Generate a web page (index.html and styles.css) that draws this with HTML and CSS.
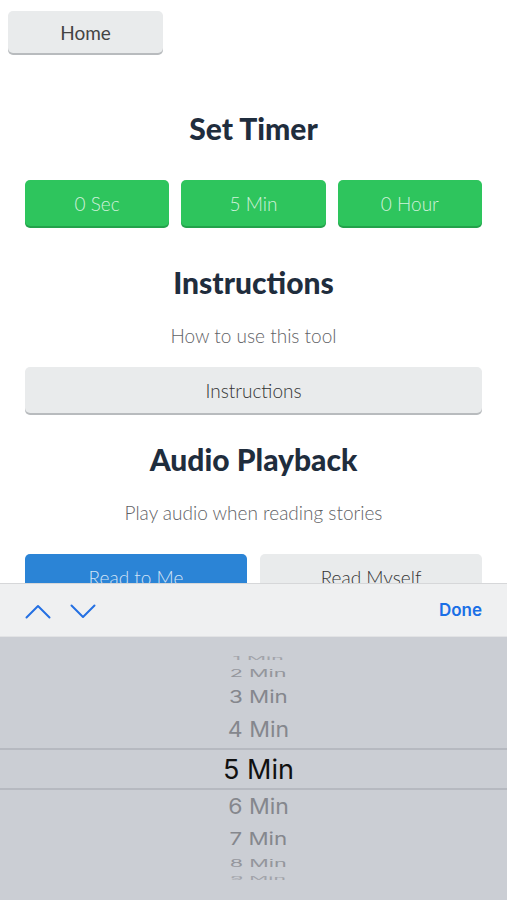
FILE: index.html
```html
<!DOCTYPE html>
<html lang="en">
<head>
    <meta charset="UTF-8">
    <meta name="viewport" content="width=device-width, initial-scale=1.0">
    <title>Set Timer</title>
    <link rel="stylesheet" href="styles.css">
</head>
<body>
    <div class="topbar">
        <button class="btn btn-grey home-btn">Home</button>
    </div>

    <main class="content">
        <section class="block timer">
            <h2>Set Timer</h2>
            <div class="row">
                <button class="btn btn-green">0 Sec</button>
                <button class="btn btn-green">5 Min</button>
                <button class="btn btn-green">0 Hour</button>
            </div>
        </section>

        <section class="block instructions">
            <h2>Instructions</h2>
            <p class="sub">How to use this tool</p>
            <button class="btn btn-grey wide">Instructions</button>
        </section>

        <section class="block audio">
            <h2>Audio Playback</h2>
            <p class="sub">Play audio when reading stories</p>
            <div class="row">
                <button class="btn btn-blue">Read to Me</button>
                <button class="btn btn-grey">Read Myself</button>
            </div>
        </section>
    </main>

    <!-- picker keyboard over the page -->
    <div class="keyboard">
        <div class="toolbar">
            <div class="arrows">
                <svg width="26" height="15" viewBox="0 0 26 15"><path d="M1.5 13.5 L13 2 L24.5 13.5" fill="none" stroke="#2470e3" stroke-width="2" stroke-linecap="round" stroke-linejoin="round"/></svg>
                <svg width="26" height="15" viewBox="0 0 26 15"><path d="M1.5 1.5 L13 13 L24.5 1.5" fill="none" stroke="#2470e3" stroke-width="2" stroke-linecap="round" stroke-linejoin="round"/></svg>
            </div>
            <span class="done">Done</span>
        </div>
        <div class="picker">
            <div class="item far2">1 Min</div>
            <div class="item far1">2 Min</div>
            <div class="item near2 h30">3 Min</div>
            <div class="item near1 h36">4 Min</div>
            <div class="item selected">5 Min</div>
            <div class="item near1 h34">6 Min</div>
            <div class="item near2 h30">7 Min</div>
            <div class="item far1">8 Min</div>
            <div class="item far2">9 Min</div>
        </div>
    </div>
</body>
</html>
```

FILE: styles.css
```css
body { margin: 0; background: #fff; font-family: Lato, "Liberation Sans", sans-serif; color: #333; }
.topbar { padding: 11px 8px 0; }
.btn { border: none; border-radius: 5px; height: 46px; font-family: Lato, "Liberation Sans", sans-serif; font-size: 19px; font-weight: 300; cursor: pointer; }
.btn-grey { background: #e9ebec; color: #333; box-shadow: 0 2px 0 #b8bbbe; }
.btn-green { background: #2ec55d; color: rgba(255,255,255,0.78); box-shadow: 0 2px 0 #23a24b; }
.btn-blue { background: #2b84d6; color: rgba(255,255,255,0.8); box-shadow: 0 2px 0 #1f68b0; }
.home-btn { display: block; width: 155px; height: 42px; font-weight: 400; color: #444; }

.content { padding: 0 25px; text-align: center; }
h2 { margin: 0; font-size: 30px; line-height: 36px; font-weight: 900; color: #1f2d3d; }
.sub { margin: 24px 0 19px; font-size: 19px; line-height: 24px; font-weight: 300; color: #5f6266; }
.row { display: flex; gap: 12px; }
.row .btn { flex: 1; }
.wide { width: 100%; display: block; }

.timer { padding-top: 57px; }
.timer .row { margin-top: 34px; }
.instructions { padding-top: 38px; }
.audio { padding-top: 28px; }
.audio .sub { margin-bottom: 29px; }
.audio .row { gap: 13px; }

/* bottom picker */
.keyboard { position: fixed; left: 0; right: 0; bottom: 0; height: 317px; display: flex; flex-direction: column; }
.toolbar { height: 52px; background: #eff0f1; border-top: 1px solid #d6d7d9; border-bottom: 1px solid #e2e3e5; display: flex; align-items: center; justify-content: space-between; padding: 0 25px; }
.arrows { display: flex; gap: 19px; padding-top: 2px; }
.done { font-family: Inter, "Liberation Sans", sans-serif; font-weight: 600; font-size: 17px; color: #1a6fe6; }
.picker { flex: 1; background: #cbced4; padding-top: 15px; display: flex; flex-direction: column; align-items: center; font-family: Inter, "Liberation Sans", sans-serif; }
.item { width: 100%; display: flex; align-items: center; justify-content: center; font-size: 23px; color: #85878d; padding-left: 10px; box-sizing: border-box; }
.selected { height: 42px; font-size: 27px; color: #111; border-top: 2px solid #b6b9c0; border-bottom: 2px solid #b6b9c0; box-sizing: border-box; }
.far2 { height: 12px; transform: scale(0.92, 0.2); color: #a2a4aa; }
.far1 { height: 18px; transform: scale(0.94, 0.45); color: #94969c; }
.near2 { transform: scale(0.97, 0.75); }
.near1 { transform: scaleY(0.92); }
.h30 { height: 30px; }
.h36 { height: 36px; }
.h34 { height: 34px; }
```
